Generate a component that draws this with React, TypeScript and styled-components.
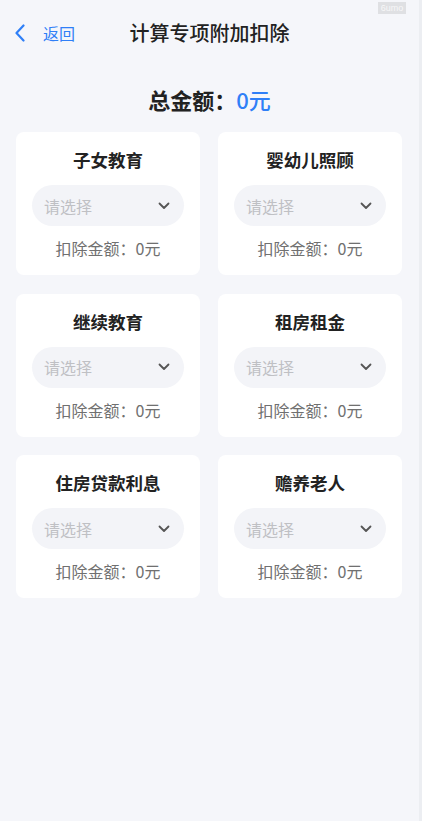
import React from 'react';
import styled, { createGlobalStyle } from 'styled-components';

const GlobalStyle = createGlobalStyle`
	html, body {
		margin: 0;
		padding: 0;
		background: #f5f6fa;
	}
	body {
		font-family: "Noto Sans CJK SC", "Noto Sans", sans-serif;
	}
`;

const items = ['子女教育', '婴幼儿照顾', '继续教育', '租房租金', '住房贷款利息', '赡养老人'];

export default function App() {
	return (
		<Page>
			<GlobalStyle />
			<Watermark>6umo</Watermark>
			<Header>
				<BackButton>
					<svg width="12" height="18" viewBox="0 0 12 18" fill="none">
						<path d="M9.5 1.5L2.5 9L9.5 16.5" stroke="#2f7ff7" strokeWidth="2.2" strokeLinecap="round" strokeLinejoin="round" />
					</svg>
					<BackText>返回</BackText>
				</BackButton>
				<Title>计算专项附加扣除</Title>
			</Header>
			<Total>
				总金额：<TotalValue>0元</TotalValue>
			</Total>
			<CardGrid>
				{items.map((name) => (
					<Card key={name}>
						<CardTitle>{name}</CardTitle>
						<Select>
							<Placeholder>请选择</Placeholder>
							<svg width="12" height="8" viewBox="0 0 12 8" fill="none">
								<path d="M1.5 1.5L6 6L10.5 1.5" stroke="#555" strokeWidth="1.8" strokeLinecap="round" strokeLinejoin="round" />
							</svg>
						</Select>
						<Deduction>扣除金额：0元</Deduction>
					</Card>
				))}
			</CardGrid>
		</Page>
	);
}

const Page = styled.div`
	position: relative;
	width: 419px;
	min-height: 821px;
	background: #f5f6fa;
	border-right: 3px solid #eceef2;
`;

const Watermark = styled.div`
	position: absolute;
	top: 2px;
	left: 378px;
	width: 28px;
	height: 12px;
	background: #dfe0e3;
	color: #f7f7f8;
	font-family: "Liberation Sans", sans-serif;
	font-size: 9px;
	line-height: 12px;
	text-align: center;
`;

const Header = styled.div`
	position: relative;
	height: 66px;
	display: flex;
	align-items: center;
	justify-content: center;
`;

const BackButton = styled.div`
	position: absolute;
	left: 14px;
	top: 24px;
	display: flex;
	align-items: center;
	gap: 17px;
`;

const BackText = styled.span`
	color: #2f7ff7;
	font-size: 16px;
	line-height: 18px;
`;

const Title = styled.div`
	color: #222;
	font-size: 20px;
	font-weight: 500;
	line-height: 24px;
	margin-top: -1px;
`;

const Total = styled.div`
	text-align: center;
	font-size: 22px;
	font-weight: 700;
	color: #222;
	line-height: 30px;
	margin-top: 18px;
`;

const TotalValue = styled.span`
	color: #2f7ff7;
	font-weight: 500;
`;

const CardGrid = styled.div`
	display: grid;
	grid-template-columns: 184px 184px;
	column-gap: 18px;
	row-gap: 18.5px;
	padding: 0 16px;
	margin-top: 18px;
`;

const Card = styled.div`
	height: 143px;
	box-sizing: border-box;
	background: #fff;
	border-radius: 8px;
	padding: 17px 16px 0;
	display: flex;
	flex-direction: column;
	align-items: stretch;
`;

const CardTitle = styled.div`
	text-align: center;
	font-size: 17.5px;
	font-weight: 600;
	color: #222;
	line-height: 22px;
`;

const Select = styled.div`
	margin-top: 14px;
	height: 41px;
	border-radius: 21px;
	background: #f3f4f8;
	display: flex;
	align-items: center;
	justify-content: space-between;
	padding: 0 14px 0 12px;
`;

const Placeholder = styled.span`
	color: #bfc0c4;
	font-size: 16px;
`;

const Deduction = styled.div`
	margin-top: 11px;
	text-align: center;
	color: #707070;
	font-size: 16px;
	line-height: 22px;
`;
